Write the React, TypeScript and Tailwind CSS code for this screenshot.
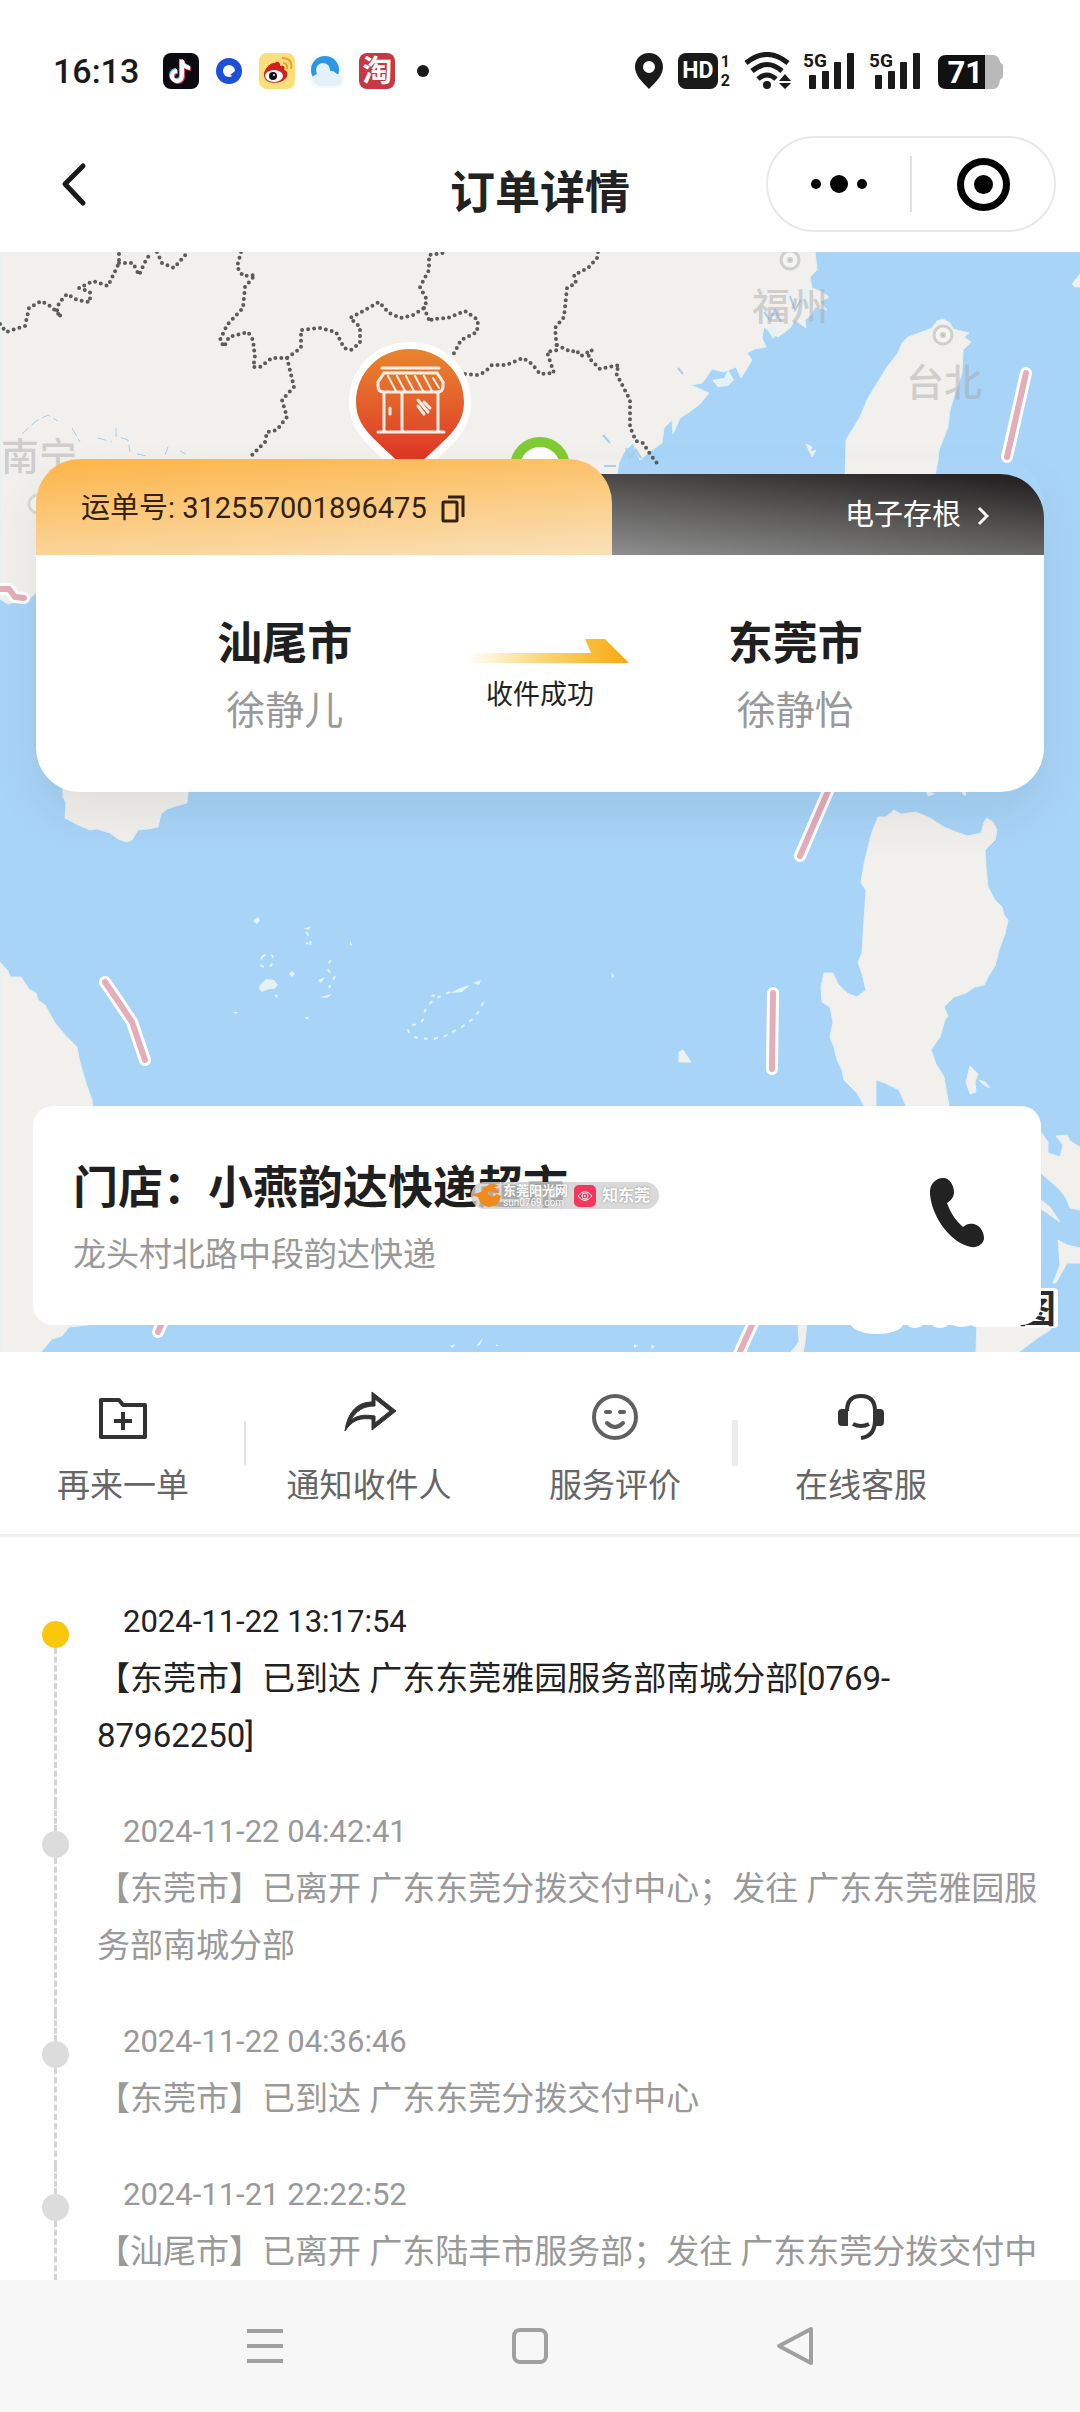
import React from "react";

const LAND = "#f1f0ed";

const landShapes = [
  // mainland coast
  "M0 0H815L817 18 810 25 812 36 822 40 829 45 820 50 827 58 815 55 812 62 805 68 806 76 795 68 790 76 778 85 770 80 764 75 762 86 766 95 755 97 747 101 752 108 746 118 741 126 736 115 724 120 712 117 706 126 702 131 691 133 709 141 700 152 688 161 680 166 673 182 672 168 664 176 662 191 652 198 640 208 633 191 624 200 619 211 617 222 600 300 36 341 30 346 18 349 8 352 0 347Z",
  // Taiwan
  "M943 67L950 71 953 77 969 81 964 85 971 90 963 98 962 121 955 141 950 158 948 175 939 198 938 208 934 230H845L846 188 852 178 860 165 868 146 879 128 887 115 898 101 902 91 908 85 922 80 932 76 937 69Z",
  // Hainan
  "M63 530V545L66 551 65 566 78 573 90 578 97 577 110 581 118 587 127 590 132 588 138 578 148 577 158 575 161 562 167 557 176 554 187 551 189 530Z",
  // Vietnam
  "M0 710L8 719 10 725 21 725 29 737 36 741 38 748 45 753 55 771 66 784 77 795 79 806 83 821 87 834 92 848 110 1000 88 1073 69 1075 62 1084 52 1087 41 1100H0Z",
  // Luzon
  "M878 565L886 565 894 558 901 562 916 560 930 566 944 575 956 580 968 584 981 581 984 570 987 566 993 570 997 578 995 588 985 598 986 615 988 635 995 648 1002 655 1004 663 1008 668 1005 682 999 698 995 714 988 725 984 733 975 735 966 741 954 745 944 755 948 764 945 768 940 785 931 798 936 812 944 825 949 854 950 880H906V854L899 838 885 831 876 828V880H866L864 854 857 841 850 834 844 828 842 818 837 808 834 795 830 785 833 770 830 755 822 750 821 735 824 721 833 721 838 732 847 741 857 745 866 738 862 722 858 710 862 701 864 668 866 638 861 631 864 612 868 595 872 580Z",
  "M1041 880L1048 890V901L1060 905 1063 893 1056 884 1067 883 1070 889 1080 895V958L1070 956 1066 946 1060 938 1041 921Z",
  "M1041 948L1050 955 1060 970 1041 957Z",
  "M1058 988L1067 993 1080 996V1011H1067L1056 1031H1053L1060 1013Z",
  "M977 1070H1055L1050 1078 1039 1085 1019 1100H976Z",
  "M798 1070H807L805 1090 803 1100H791L799 1090Z",
  "M1072 32L1080 22V35L1075 35Z",
  "M970 814L978 822 975 830 976 840 970 842 966 830Z",
  "M979 828L985 830 990 836 984 833Z",
  "M683 798L691 810H679V800Z",
  "M806 192L812 195 810 200 816 198 812 205Z",
  "M926 538L934 542 928 544Z",
  "M962 541L966 538 965 544Z",
];

const islets = [
  "M712 128l12-2 4-8 6 10-6 6-10 1z",
  "M767 77l8-4 3 8-5 6z",
  "M800 40l10-5-2 12 8 3-9 9-6-5z",
  "M253 669l5-4 2 3-3 4z",
  "M304 676l7-1-3 3zM305 690l4 1-2 2zM350 689l2 4-2 1z",
  "M260 733l6-6 8 1 4 5-4 4-5 0-7 3-3-3z",
  "M289 722l3-3 3 3-3 3zM318 728l7-3-4 6zM320 745l12-3-5 4zM274 743l4 0-1 3z",
  "M233 760l5 0-2 2zM305 765l4 0-2 3zM611 720l3 4-2 2z",
  "M450 741l10-5 10-3-8 7z M473 731l8-3-2 5zM430 744l4-2 1 3z",
  "M450 1094l5-2-2 4zM476 1094l7-8-3 7zM496 1092l3 2-3 0z",
  "M634 1092l4 2-4 2zM651 1093l4 1-3 3z",
];

const atolls = [
  "M450 740C430 748 424 755 424 765C421 776 408 770 408 778C412 788 420 786 432 787C440 786 448 784 452 780C474 770 482 758 484 746",
  "M262 705q10-8 12 4q-5 10-14 4z",
  "M306 680q6 8 4 14",
  "M331 708q-8 10 4 16l-6 12",
];

const borders = [
  "M0 72L6 80 25 74 29 56 41 49 52 55 61 65 57 58 59 51 67 42 77 48 90 50 90 40 79 36 93 29 108 34 119 11V0",
  "M119 11L133 11 139 23 145 10 151 0",
  "M157 0L162 11 174 16 188 0",
  "M241 0L237 15 243 24 255 23 245 35 243 56 227 73 220 88 224 95 229 85 248 80 253 88 255 106 253 115 260 115 272 106 287 106 301 96 301 78 320 76 336 80 344 96 351 98 360 91 360 75 350 66 365 58 379 50 389 61 401 66 413 63 424 56 427 48 420 35 429 18 429 3 443 1",
  "M424 56L430 70 432 67 448 66 465 59 478 68 477 80 461 88 453 103",
  "M287 106L294 135 282 148 287 165 277 178 267 180 265 190 249 206",
  "M465 122L477 123 485 120 492 113 506 113 523 106 532 112 540 122 554 121 547 100 557 98 555 76 564 65 567 36 576 31 574 23 588 16 597 6 598 0",
  "M557 93L571 100 576 98 581 104 592 98 588 105 600 117 619 113 616 121 630 148 630 175 636 189 643 191 650 202 660 215",
];

const dashLines = [
  "M-6 337L9 337 15 345 24 346",
  "M1026 121L1007 205",
  "M845 500L800 604",
  "M105 730L120 752 132 770 145 808",
  "M773 741L772 817",
  "M166 1062L158 1080",
  "M757 1062L738 1104",
];

function CityDot({ x, y }: { x: number; y: number }) {
  return (
    <g fill="none" stroke="#cfcfce">
      <circle cx={x} cy={y} r="9" fill="#f4f4f3" strokeWidth="3" />
      <circle cx={x} cy={y} r="2" fill="#bdbdbd" strokeWidth="2" />
    </g>
  );
}

function MapCanvas() {
  return (
    <svg
      className="absolute inset-0 h-full w-full"
      viewBox="0 0 1080 1100"
      preserveAspectRatio="xMidYMid slice"
      aria-hidden="true"
    >
      <defs>
        <linearGradient id="pin" x1="0" y1="0" x2="0" y2="1">
          <stop offset="0" stopColor="#e8862d" />
          <stop offset="0.55" stopColor="#e2552a" />
          <stop offset="1" stopColor="#de2a22" />
        </linearGradient>
      </defs>
      <rect width="1080" height="1100" fill="#a8d4f7" />
      {landShapes.map((d) => (
        <path key={d} d={d} fill={LAND} stroke="#e4f0f2" strokeWidth="1" />
      ))}
      {islets.map((d) => (
        <path key={d} d={d} fill="#e3f3f4" />
      ))}
      {atolls.map((d) => (
        <path key={d} d={d} fill="none" stroke="#dff4f0" strokeWidth="2" strokeDasharray="4 6" />
      ))}
      <g fill="none" stroke="#a9cdea" strokeWidth="1">
        <path d="M22 182l14-13 12-6 10 6M72 176l8 14M98 186l14 4M116 176v8l12 4 2 12M137 202l10 2M165 203l3-8M180 199l6 3" strokeDasharray="9 4" />
        <path d="M764 60l6 8 5-10 6 12M790 44l5 14 6-10M603 183l7 8M604 214h12M626 196l4 10 6-8 5 8M678 116l5 6" strokeWidth="2" />
      </g>
      <g fill="none" stroke="#5b5b5b" strokeWidth="4" strokeLinecap="round" strokeDasharray="0 6">
        {borders.map((d) => (
          <path key={d} d={d} />
        ))}
      </g>
      <g fill="none" strokeLinecap="round" strokeLinejoin="round">
        {dashLines.map((d) => (
          <g key={d}>
            <path d={d} stroke="#ffffff" strokeWidth="12" />
            <path d={d} stroke="#e3adba" strokeWidth="6" />
          </g>
        ))}
      </g>
      <CityDot x={790} y={8} />
      <CityDot x={943} y={83} />
      <circle cx="38" cy="252" r="9" fill="#f4f4f3" stroke="#d9d9d8" strokeWidth="3" />
      <g fill="#a4a4a6" fillOpacity="0.45" fontSize="38" fontWeight="500" fontFamily="'Noto Sans CJK SC', sans-serif">
        <text x="752" y="68">福州</text>
        <text x="906" y="144">台北</text>
        <text x="1" y="218">南宁</text>
      </g>
      <circle cx="540" cy="215" r="25" fill="#ffffff" stroke="#7fcb33" strokeWidth="10" />
      <path d="M410 90C374 90 349 117 349 150C349 189 384 201 404 229H416C436 201 471 189 471 150C471 117 446 90 410 90Z" fill="#ffffff" />
      <path d="M410 97C379 97 356 121 356 150C356 181 384 191 410 223C436 191 464 181 464 150C464 121 441 97 410 97Z" fill="url(#pin)" />
      <g fill="none" stroke="#fdeee6" strokeWidth="3" strokeLinecap="round">
        <path d="M382 116H439M384 121H437L443 130V134Q443 140 437 140H384Q378 140 378 134V130Z" />
        <path d="M388 124l8 15M397 124l8 15M406 124l8 15M415 124l8 15M424 124l8 15M433 126l6 10" strokeWidth="2" />
        <path d="M384 141V178M402 141V178M438 141V178M378 180H444M390 156v6M418 148l10 12M418 154l6 8M424 150l6 6" />
      </g>
      <g fill="#ffffff">
        <rect x="1020" y="1036" width="38" height="40" rx="4" />
        <ellipse cx="877" cy="1072" rx="26" ry="10" />
        <ellipse cx="915" cy="1070" rx="9" ry="6" />
        <ellipse cx="940" cy="1070" rx="10" ry="6" />
        <ellipse cx="962" cy="1070" rx="12" ry="5" />
        <rect x="970" y="1060" width="70" height="15" rx="6" />
      </g>
      <text x="1018" y="1070" fontSize="38" fontWeight="700" fill="#2c2c2c" fontFamily="'Noto Sans CJK SC', sans-serif">图</text>
    </svg>
  );
}

function AppBadges() {
  return (
    <div className="flex items-center gap-[14px]">
      <svg className="size-9" viewBox="0 0 36 36" aria-label="抖音">
        <rect width="36" height="36" rx="8" fill="#0a0a10" />
        <g fill="none" strokeWidth="4">
          <path d="M19 7v16a5 5 0 1 1-5-5M19 8q1 6 8 7" stroke="#30d8d8" transform="translate(-1 -1)" />
          <path d="M19 7v16a5 5 0 1 1-5-5M19 8q1 6 8 7" stroke="#f03a5c" transform="translate(1 1)" />
          <path d="M19 7v16a5 5 0 1 1-5-5M19 8q1 6 8 7" stroke="#ffffff" />
        </g>
      </svg>
      <svg className="size-8" viewBox="0 0 32 32" aria-label="夸克">
        <circle cx="16" cy="16" r="13" fill="#1d4fd8" />
        <circle cx="16" cy="16" r="6" fill="#ffffff" />
        <path d="M17 20l5-4v6z" fill="#1d4fd8" />
      </svg>
      <svg className="size-9" viewBox="0 0 36 36" aria-label="微博">
        <rect width="36" height="36" rx="8" fill="#fbdf7a" />
        <path d="M5 23C4 17 11 9 16 10C18 7 22 10 21 13C26 12 26 15 25 17C30 18 29 24 26 26C20 32 6 31 5 23Z" fill="#d1211f" />
        <ellipse cx="15" cy="23" rx="9" ry="6" fill="#ffffff" />
        <circle cx="14" cy="23" r="4" fill="#111111" />
        <circle cx="15" cy="22" r="1" fill="#ffffff" />
        <path d="M24 10q5 0 4 6M23 5q11 0 9 11" fill="none" stroke="#eda130" strokeWidth="2" />
      </svg>
      <svg className="size-9" viewBox="0 0 36 36" aria-label="QQ浏览器">
        <rect x="1" y="2" width="34" height="33" rx="8" fill="#f6fafd" />
        <circle cx="16" cy="17" r="14" fill="#2c97e4" />
        <circle cx="14" cy="17" r="7" fill="#e4f2fc" />
        <path d="M3 24q8-6 14-4q5-5 11 1q6 1 5 7q-1 5-7 5H12q-7 0-9-9z" fill="#e3f1fa" />
      </svg>
      <span className="flex size-9 items-center justify-center rounded-lg bg-[#c73843] text-[30px] leading-9 font-bold text-white">
        淘
      </span>
      <span className="ml-2 size-3 rounded-full bg-[#1a1a1a]" />
    </div>
  );
}

function Signal() {
  return (
    <svg className="h-[46px] w-[53px]" viewBox="0 -4 53 46" aria-label="5G" fill="#1a1a1a">
      <text x="0" y="15" fontSize="19" fontWeight="700" fontFamily="Roboto, sans-serif">5G</text>
      <rect x="6" y="23" width="7" height="14" rx="1" />
      <rect x="19" y="19" width="7" height="18" rx="1" />
      <rect x="31" y="10" width="7" height="27" rx="1" />
      <rect x="44" y="1" width="7" height="36" rx="1" />
    </svg>
  );
}

function StatusBar() {
  return (
    <div className="flex items-center justify-between pt-12 pr-[76px] pl-[53px]">
      <div className="flex items-center gap-6">
        <time className="text-[34px] leading-[38px] font-medium text-[#1a1a1a]">16:13</time>
        <AppBadges />
      </div>
      <div className="flex items-center text-[#1a1a1a]">
        <svg className="h-[38px] w-[30px]" viewBox="0 0 30 38" aria-label="定位">
          <path d="M15 1C7 1 1 7 1 15C1 23 8 30 15 37C22 30 29 23 29 15C29 7 23 1 15 1Zm0 8a6 6 0 1 1 0 12a6 6 0 1 1 0-12Z" fill="currentColor" fillRule="evenodd" />
        </svg>
        <span className="ml-[14px] flex h-9 w-10 items-center justify-center rounded-lg bg-[#1a1a1a] text-[23px] leading-9 font-bold text-white">
          HD
        </span>
        <span className="ml-[3px] flex flex-col text-[16px] leading-[19px] font-bold">
          <span>1</span>
          <span>2</span>
        </span>
        <svg className="ml-[14px] h-[38px] w-[47px]" viewBox="0 0 47 38" aria-label="无线网络">
          <g fill="none" stroke="currentColor" strokeWidth="5">
            <path d="M2 11Q23-6 44 11" />
            <path d="M8 19Q23 6 38 19" />
            <path d="M14 27Q23 19 32 27" />
          </g>
          <circle cx="23" cy="33" r="4" fill="currentColor" />
          <path d="M41 22l6 7H35zM41 37l6-6H35z" fill="currentColor" />
        </svg>
        <div className="ml-3 flex gap-[13px]">
          <Signal />
          <Signal />
        </div>
        <svg className="ml-4 h-[46px] w-[66px]" viewBox="0 -4 66 46" aria-label="电量 71">
          <path d="M46 3h9q6 0 7 7l3 3v12l-3 3q-1 9-7 9h-9z" fill="#b9b9b9" />
          <path d="M8 3H47V37H8Q0 37 0 29V11Q0 3 8 3Z" fill="#111111" />
          <text x="45" y="31" textAnchor="end" fontSize="31" fontWeight="700" fill="#ffffff" fontFamily="Roboto, sans-serif">71</text>
        </svg>
      </div>
    </div>
  );
}

function TitleBar() {
  return (
    <header className="grid grid-cols-[1fr_auto_1fr] items-center px-6 pt-[42px] pb-5">
      <button type="button" aria-label="返回" className="ml-7 flex size-12 items-center justify-center">
        <svg className="size-12" viewBox="0 0 48 48" fill="none" stroke="#1a1a1a" strokeWidth="5" strokeLinecap="round" strokeLinejoin="round">
          <path d="M31 6L13 24 31 43" />
        </svg>
      </button>
      <h1 className="pt-5 text-[45px] leading-[60px] font-bold text-[#222]">订单详情</h1>
      <div className="flex h-24 w-[290px] items-center justify-self-end rounded-full border-2 border-[#e9e9e9]">
        <button type="button" aria-label="更多" className="flex h-full flex-1 items-center justify-center gap-[9px]">
          <span className="size-[10px] rounded-full bg-black" />
          <span className="size-[18px] rounded-full bg-black" />
          <span className="size-[10px] rounded-full bg-black" />
        </button>
        <span className="h-14 w-[2px] bg-[#e0e0e0]" />
        <button type="button" aria-label="关闭" className="flex h-full flex-1 items-center justify-center">
          <span className="flex size-[53px] items-center justify-center rounded-full border-[7px] border-black">
            <span className="size-[19px] rounded-full bg-black" />
          </span>
        </button>
      </div>
    </header>
  );
}

function Party({ city, name }: { city: string; name: string }) {
  return (
    <div className="text-center">
      <p className="text-[45px] leading-[60px] font-bold text-[#1f1f1f]">{city}</p>
      <p className="mt-2 text-[39px] leading-[56px] text-[#999]">{name}</p>
    </div>
  );
}

function WaybillCard() {
  return (
    <section className="relative mx-9 rounded-[44px] shadow-[0_24px_50px_rgba(0,0,0,0.07)]">
      <div className="flex items-end">
        <div className="relative z-10 flex h-24 w-4/7 items-center rounded-t-[44px] bg-[linear-gradient(176deg,#fdb64c_5%,#f9dfb4_95%)] pt-1 pl-[45px] text-[29px] text-[#33230c]">
          <span>运单号: 312557001896475</span>
          <button type="button" aria-label="复制" className="ml-[14px]">
            <svg className="h-[30px] w-6" viewBox="0 0 24 30" fill="none" stroke="#33230c" strokeWidth="3">
              <rect x="2" y="8" width="14" height="19" rx="1" />
              <path d="M7 3H22V23" />
            </svg>
          </button>
        </div>
        <a
          href="#receipt"
          className="-ml-11 flex h-[81px] flex-1 items-center justify-end gap-4 rounded-tr-[44px] bg-[linear-gradient(186deg,#262424_8%,#5a5958_50%,#929292_100%)] pt-[2px] pr-[55px] text-[29px] text-white"
        >
          电子存根
          <svg className="h-5 w-3" viewBox="0 0 12 20" fill="none" stroke="currentColor" strokeWidth="3">
            <path d="M2 2L10 10 2 18" />
          </svg>
        </a>
      </div>
      <div className="grid grid-cols-3 rounded-b-[44px] bg-white px-[121px] pt-[60px] pb-[53px]">
        <Party city="汕尾市" name="徐静儿" />
        <div className="flex flex-col items-center pt-6">
          <svg className="h-6 w-[178px]" viewBox="0 0 178 24" aria-hidden="true">
            <defs>
              <linearGradient id="arrow" x1="0" x2="1">
                <stop offset="0" stopColor="#ffffff" />
                <stop offset="0.5" stopColor="#fbd36c" />
                <stop offset="1" stopColor="#f8a80c" />
              </linearGradient>
            </defs>
            <path d="M16 14H140L134 0H154L178 24H16Z" fill="url(#arrow)" />
          </svg>
          <p className="mt-3 text-[27px] leading-10 text-[#222]">收件成功</p>
        </div>
        <Party city="东莞市" name="徐静怡" />
      </div>
    </section>
  );
}

function SourceBadge() {
  return (
    <div className="absolute top-[76px] left-[438px] flex h-[27px] items-center rounded-full bg-[#cfcfcf]/80 pr-[9px] text-white [text-shadow:0_0_2px_#8a8a8a]">
      <svg className="h-[27px] w-8" viewBox="0 0 32 27" aria-hidden="true">
        <path d="M0 13L10 10Q14 2 24 2L28 4Q18 5 17 12Q20 17 26 12L30 14Q28 25 18 25Q9 24 7 15Z" fill="#f08a1c" />
        <path d="M18 8q6-2 8 3" fill="none" stroke="#f08a1c" strokeWidth="4" />
      </svg>
      <span className="flex flex-col">
        <span className="text-[13px] leading-[14px] font-bold">东莞阳光网</span>
        <span className="text-[10px] leading-[10px]">sun0769.com</span>
      </span>
      <svg className="mx-[6px] size-[22px]" viewBox="0 0 22 22" aria-hidden="true">
        <rect width="22" height="22" rx="5" fill="#f5365c" />
        <g fill="none" stroke="#ffffff" strokeWidth="1">
          <path d="M4 11Q11 2 18 11Q11 20 4 11Z" />
          <circle cx="11" cy="11" r="3" />
        </g>
        <circle cx="11" cy="11" r="1" fill="#ffffff" />
      </svg>
      <span className="text-[16px] leading-5 font-bold">知东莞</span>
    </div>
  );
}

function StoreCard() {
  return (
    <section className="relative mt-[314px] mr-[39px] ml-[33px] flex items-center justify-between rounded-[20px] bg-white pt-[53px] pr-[54px] pb-[42px] pl-10">
      <div>
        <h2 className="text-[45px] leading-[60px] font-bold text-[#1f1f1f]">门店：小燕韵达快递超市</h2>
        <p className="mt-2 text-[33px] leading-[56px] text-[#999]">龙头村北路中段韵达快递</p>
      </div>
      <a href="tel:10000" aria-label="拨打电话" className="pb-4">
        <svg className="h-[72px] w-[60px]" viewBox="0 0 60 72" fill="#222222">
          <path d="M3 17C2 7 9 1 16 1C23 1 27 9 27 15C27 21 23 24 20 26C23 35 29 44 36 50C39 47 43 46 47 47C54 49 57 56 57 61C57 67 50 71 44 70C24 66 5 41 3 17Z" />
        </svg>
      </a>
      <SourceBadge />
    </section>
  );
}

const actions: { label: string; divider?: string; icon: React.ReactNode }[] = [
  {
    label: "再来一单",
    divider: "-ml-[2px] h-11 w-[2px] bg-[#e3e3e3]",
    icon: (
      <g fill="none" stroke="#333333" strokeWidth="4" strokeLinejoin="round">
        <path d="M6 11H24L28 16H50V48H6Z" />
        <path d="M28 23V41M19 32H37" />
      </g>
    ),
  },
  {
    label: "通知收件人",
    icon: (
      <path d="M4 42C7 21 18 13 31 13V3L55 22 31 41V30C20 29 12 30 4 42Z M10 31C18 25 26 26 34 27V34L49 22 34 10V17C22 17 15 22 10 31Z" fill="#333333" fillRule="evenodd" stroke="#333333" strokeWidth="1" />
    ),
  },
  {
    label: "服务评价",
    divider: "-ml-[6px] h-[46px] w-[6px] bg-[#ededed]",
    icon: (
      <g fill="none" stroke="#606060" strokeWidth="4" strokeLinecap="round">
        <circle cx="28" cy="28" r="21" />
        <path d="M19 23H23M33 23H37M20 34Q28 42 36 34" />
      </g>
    ),
  },
  {
    label: "在线客服",
    icon: (
      <g>
        <path d="M14 22C14 11 20 7 28 7C36 7 42 11 42 22V31C42 42 37 48 28 49M20 35Q28 39 36 35" fill="none" stroke="#333333" strokeWidth="4" />
        <path d="M15 20V37H9Q5 37 5 33V24Q5 20 9 20ZM42 20H47Q51 20 51 24V33Q51 37 47 37H42Z" fill="#333333" />
      </g>
    ),
  },
];

function ActionRow() {
  return (
    <ul className="grid grid-cols-4 border-b-[3px] border-[#f0f0f0] pr-24">
      {actions.map((a) => (
        <li key={a.label} className="flex items-center">
          <button type="button" className="flex flex-1 flex-col items-center pt-[37px] pb-6 text-[33px] leading-[48px] text-[#666]">
            <svg className="mb-[17px] size-14" viewBox="0 0 56 56" aria-hidden="true">
              {a.icon}
            </svg>
            {a.label}
          </button>
          {a.divider && <span className={a.divider} />}
        </li>
      ))}
    </ul>
  );
}

const events = [
  { time: "2024-11-22 13:17:54", text: "【东莞市】已到达 广东东莞雅园服务部南城分部[0769-87962250]" },
  { time: "2024-11-22 04:42:41", text: "【东莞市】已离开 广东东莞分拨交付中心；发往 广东东莞雅园服务部南城分部" },
  { time: "2024-11-22 04:36:46", text: "【东莞市】已到达 广东东莞分拨交付中心" },
  { time: "2024-11-21 22:22:52", text: "【汕尾市】已离开 广东陆丰市服务部；发往 广东东莞分拨交付中" },
];

function Timeline() {
  return (
    <ol className="pt-14 pr-10 pl-[42px]">
      {events.map((e, i) => {
        const first = i === 0;
        const last = i === events.length - 1;
        return (
          <li key={e.time} className={first ? "flex gap-7 text-[#222]" : "flex gap-7 text-[#999]"}>
            <div className="flex w-[27px] shrink-0 flex-col items-center">
              <span className={first ? "h-7" : "h-7 border-l-[3px] border-dashed border-[#d4d4d4]"} />
              <span className={first ? "size-[27px] rounded-full bg-[#fac80a]" : "size-[27px] rounded-full bg-[#dcdcdc]"} />
              <span className="flex-1 border-l-[3px] border-dashed border-[#d4d4d4]" />
            </div>
            <div className={last ? "flex-1" : "flex-1 pb-[39px]"}>
              <time className="block pl-[26px] text-[31px] leading-[57px]">{e.time}</time>
              <p className="text-[33px] leading-[57px]">{e.text}</p>
            </div>
          </li>
        );
      })}
    </ol>
  );
}

function SystemNav() {
  return (
    <nav className="mt-auto grid h-[132px] grid-cols-3 items-center justify-items-center bg-[#f7f7f7] pr-[152px] pl-[132px]">
      <button type="button" aria-label="最近任务">
        <svg className="size-10" viewBox="0 0 40 40" stroke="#a0a0a0" strokeWidth="4">
          <path d="M2 5H38M2 20H38M2 35H38" />
        </svg>
      </button>
      <button type="button" aria-label="主屏幕">
        <svg className="size-10" viewBox="0 0 40 40" fill="none" stroke="#a0a0a0" strokeWidth="4">
          <rect x="4" y="4" width="32" height="32" rx="6" />
        </svg>
      </button>
      <button type="button" aria-label="返回">
        <svg className="size-10" viewBox="0 0 40 40" fill="none" stroke="#a0a0a0" strokeWidth="4" strokeLinejoin="round">
          <path d="M36 3V37L4 20Z" />
        </svg>
      </button>
    </nav>
  );
}

export default function App() {
  return (
    <div className="flex min-h-screen flex-col bg-white font-[Roboto,'Noto_Sans_CJK_SC',sans-serif]">
      <StatusBar />
      <TitleBar />
      <main>
        <div className="relative overflow-hidden pt-[207px] pb-[27px]">
          <MapCanvas />
          <WaybillCard />
          <StoreCard />
        </div>
        <ActionRow />
        <Timeline />
      </main>
      <SystemNav />
    </div>
  );
}
